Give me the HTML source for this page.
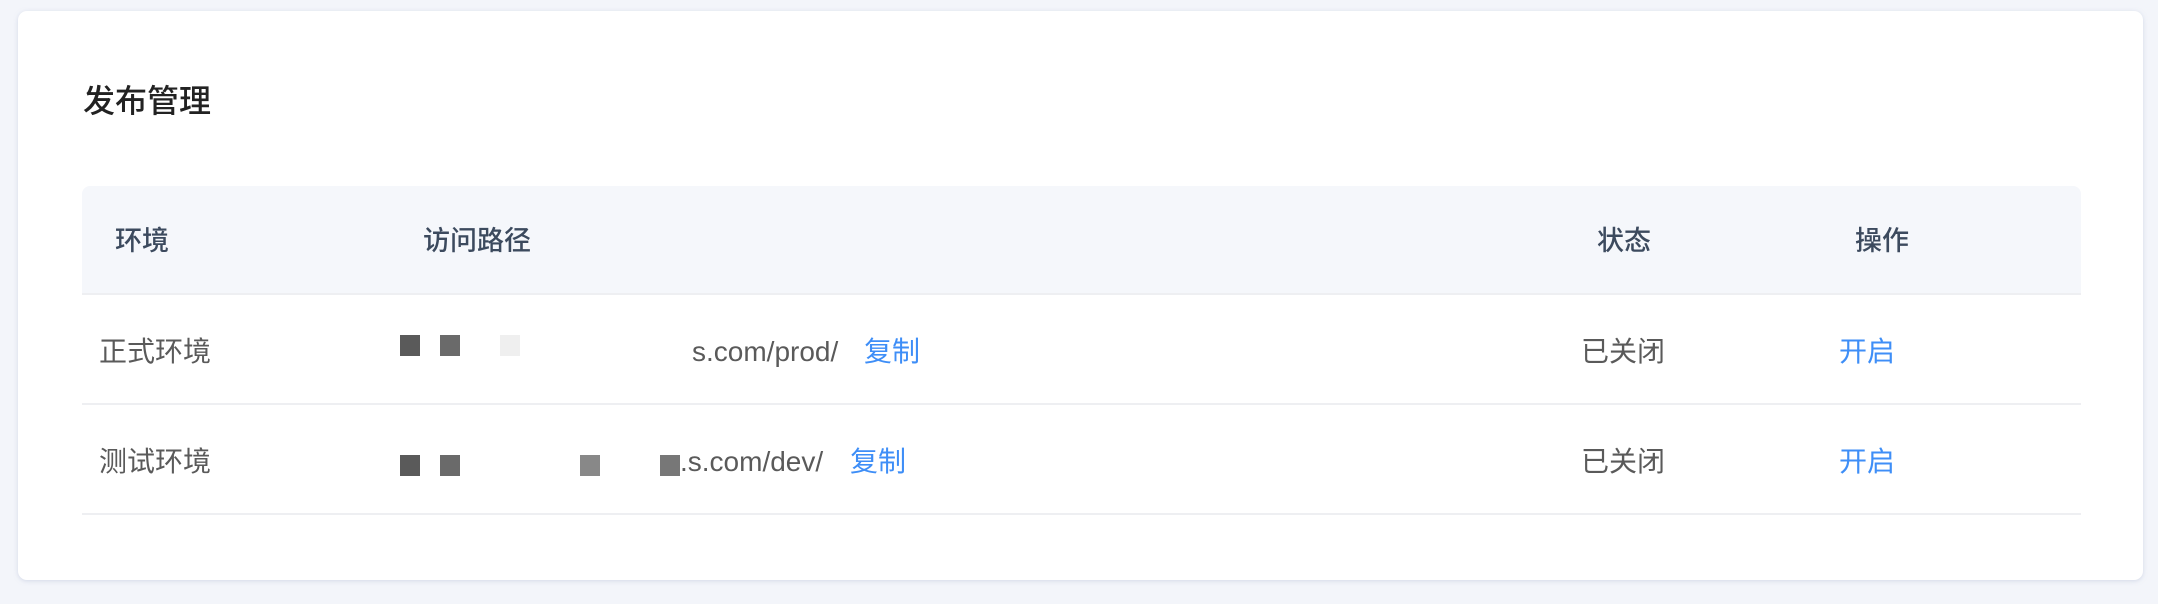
<!DOCTYPE html>
<html><head><meta charset="utf-8"><style>
*{margin:0;padding:0;box-sizing:border-box}
body{width:2158px;height:604px;background:#f3f5fa;position:relative;overflow:hidden;font-family:"Liberation Sans","Noto Sans CJK SC",sans-serif}
.card{position:absolute;left:18px;top:11px;width:2125px;height:569px;background:#fff;border-radius:9px;box-shadow:0 1px 4px rgba(180,190,215,.5)}
.a{position:absolute;white-space:nowrap;line-height:1}
.t{font-size:32px;font-weight:500;color:#222}
.h{font-size:27px;font-weight:500;color:#3c4a5e}
.b{font-size:28px;color:#5a5a5a}
.l{font-size:28px;color:#3e8ef7}
.hd{position:absolute;left:82px;top:186px;width:1999px;height:109px;background:#f5f7fb;border-radius:8px 8px 0 0;border-bottom:2px solid #eeeff2}
.ln{position:absolute;left:82px;width:1999px;height:2px;background:#eeeff2}
.sq{position:absolute;width:20px;height:21px}
</style></head><body>
<div class="card"></div>
<div class="a t" style="left:83px;top:85px">发布管理</div>
<div class="hd"></div>
<div class="a h" style="left:115px;top:228px">环境</div>
<div class="a h" style="left:423px;top:228px">访问路径</div>
<div class="a h" style="left:1597px;top:228px">状态</div>
<div class="a h" style="left:1855px;top:228px">操作</div>

<div class="a b" style="left:99px;top:338px">正式环境</div>
<div class="sq" style="left:400px;top:335px;background:#5a5a5a"></div>
<div class="sq" style="left:440px;top:335px;background:#6a6a6a"></div>
<div class="sq" style="left:500px;top:335px;background:#efefef"></div>
<div class="a b" style="left:692px;top:338px">s.com/prod/</div>
<div class="a l" style="left:864px;top:338px">复制</div>
<div class="a b" style="left:1581px;top:338px">已关闭</div>
<div class="a l" style="left:1839px;top:338px">开启</div>
<div class="ln" style="top:403px"></div>

<div class="a b" style="left:99px;top:448px">测试环境</div>
<div class="sq" style="left:400px;top:455px;background:#5a5a5a"></div>
<div class="sq" style="left:440px;top:455px;background:#6a6a6a"></div>
<div class="sq" style="left:580px;top:455px;background:#888"></div>
<div class="sq" style="left:660px;top:455px;background:#777"></div>
<div class="a b" style="left:680px;top:448px">.s.com/dev/</div>
<div class="a l" style="left:850px;top:448px">复制</div>
<div class="a b" style="left:1581px;top:448px">已关闭</div>
<div class="a l" style="left:1839px;top:448px">开启</div>
<div class="ln" style="top:513px"></div>
</body></html>
